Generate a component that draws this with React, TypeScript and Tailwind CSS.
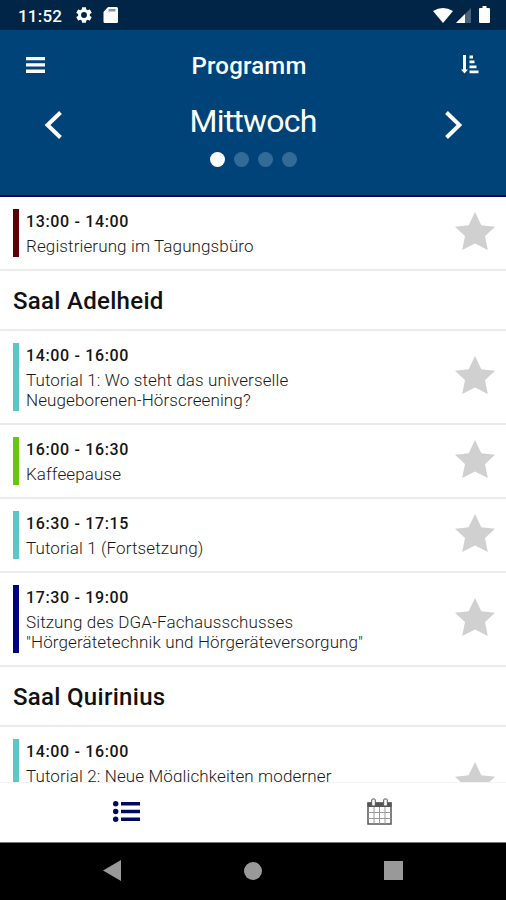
import { useState } from 'react'

type Session = { time: string; title: string[]; bar: string; tall?: boolean }
type Group = { room?: string; sessions: Session[] }

const groups: Group[] = [
  {
    sessions: [{ time: '13:00 - 14:00', title: ['Registrierung im Tagungsbüro'], bar: 'bg-[#5c0006]' }],
  },
  {
    room: 'Saal Adelheid',
    sessions: [
      {
        time: '14:00 - 16:00',
        title: ['Tutorial 1: Wo steht das universelle', 'Neugeborenen-Hörscreening?'],
        bar: 'bg-[#5bc8c8]',
      },
      { time: '16:00 - 16:30', title: ['Kaffeepause'], bar: 'bg-[#66c80a]' },
      { time: '16:30 - 17:15', title: ['Tutorial 1 (Fortsetzung)'], bar: 'bg-[#5bc8c8]' },
      {
        time: '17:30 - 19:00',
        title: ['Sitzung des DGA-Fachausschusses', '"Hörgerätetechnik und Hörgeräteversorgung"'],
        bar: 'bg-[#000080]',
      },
    ],
  },
  {
    room: 'Saal Quirinius',
    sessions: [
      {
        time: '14:00 - 16:00',
        title: ['Tutorial 2: Neue Möglichkeiten moderner'],
        bar: 'bg-[#5bc8c8]',
        tall: true,
      },
    ],
  },
]

const days = ['Mittwoch', 'Donnerstag', 'Freitag', 'Samstag']

function StatusBar() {
  return (
    <div className="flex h-[30px] shrink-0 items-center bg-[#002547] pr-[15px] pl-[18px] text-white">
      <span className="w-[57px] pt-0.5 text-[17px] leading-none font-medium tracking-[0.200px]">11:52</span>
      <svg className="size-[18px]" viewBox="1 1 22 22" fill="currentColor">
        <path d="M19.14 12.94c.04-.3.06-.61.06-.94 0-.32-.02-.64-.07-.94l2.03-1.58a.49.49 0 0 0 .12-.61l-1.92-3.32a.49.49 0 0 0-.59-.22l-2.39.96c-.5-.38-1.03-.7-1.62-.94l-.36-2.54a.48.48 0 0 0-.48-.41h-3.84c-.24 0-.43.17-.47.41l-.36 2.54c-.59.24-1.13.57-1.62.94l-2.39-.96a.48.48 0 0 0-.59.22L2.74 8.870c-.12.21-.08.47.12.61l2.03 1.58c-.05.3-.09.63-.09.94s.02.64.07.94l-2.03 1.58a.49.49 0 0 0-.12.61l1.920 3.320c.12.22.37.29.59.22l2.390-.96c.5.38 1.03.7 1.620.94l.36 2.540c.05.24.24.41.48.41h3.840c.24 0 .44-.17.47-.41l.36-2.540c.59-.24 1.130-.56 1.620-.94l2.390.96c.22.08.47 0 .59-.22l1.920-3.320a.49.49 0 0 0-.12-.61l-2.010-1.580zM12 15.600A3.600 3.600 0 1 1 12 8.400a3.600 3.600 0 0 1 0 7.200z" />
      </svg>
      <svg className="ml-2.5 h-4 w-[15px]" viewBox="0 0 15 16">
        <path d="M5 0h8.500Q15 0 15 1.500V14.500Q15 16 13.500 16H2Q.5 16 .5 14.500V5z" fill="#fff" />
        <path d="M5.500 2h7v2.500h-7z" fill="#8595a8" />
      </svg>
      <svg className="ml-auto h-[15px] w-5" viewBox="0 0 20 15" fill="currentColor">
        <path d="M0 3Q10-3 20 3L10 15z" />
      </svg>
      <svg className="ml-[3px] h-[15px] w-[15px]" viewBox="0 0 15 15">
        <path d="M15 0v15H0z" fill="#47627d" />
        <path d="M9 6v9H0z" fill="#fff" />
      </svg>
      <svg className="mr-px mb-px ml-2 h-[17px] w-[11px]" viewBox="0 0 11 17" fill="currentColor">
        <path d="M3.500 0h4v2H10q1 0 1 1v13q0 1-1 1H1q-1 0-1-1V3q0-1 1-1h2.500z" />
      </svg>
    </div>
  )
}

function Star() {
  return (
    <svg className="mb-1 h-[38px] w-10 shrink-0" viewBox="0 0 40 38" fill="#d0d0d0">
      <path d="M20 0l6.300 13.200L40 14.800 30 24l2.800 14L20 31.500 7.200 38 10 24 0 14.800l13.700-1.600z" />
    </svg>
  )
}

function SessionRow({ session }: { session: Session }) {
  return (
    <div className="flex shrink-0 items-center border-b-2 border-[#ebebeb] py-3 pr-[11px] pl-[13px]">
      <div className={`w-[5.500px] shrink-0 self-stretch ${session.bar}`} />
      <div className={`flex-1 pb-px pl-[7.500px] whitespace-nowrap ${session.tall ? 'h-[88px]' : ''}`}>
        <p className="h-[27px] text-[16px] leading-[25px] font-medium tracking-[0.650px] text-[#151515]">{session.time}</p>
        {session.title.map((line) => (
          <p key={line} className="h-5 text-[17px] leading-5 font-light tracking-[0.120px] text-[#1a1a1a]">
            {line}
          </p>
        ))}
      </div>
      <Star />
    </div>
  )
}

export default function App() {
  const [day, setDay] = useState(0)

  return (
    <div className="flex h-[900px] w-[506px] flex-col overflow-hidden bg-white font-['Roboto',sans-serif]">
      <StatusBar />

      <header className="flex h-[167px] shrink-0 flex-col border-b-2 border-[#00005f] bg-[#004379] text-white">
        <div className="flex h-[70px] items-center justify-between px-[26px]">
          <button aria-label="Menü">
            <svg className="h-4 w-[19px]" viewBox="0 0 19 16" fill="currentColor">
              <path d="M0 0h19v3.300H0zM0 6.300h19v3.300H0zM0 12.600h19v3.300H0z" />
            </svg>
          </button>
          <h1 className="pt-0.5 pr-2 text-[24px] leading-none font-medium tracking-[0.200px]">Programm</h1>
          <button aria-label="Sortieren" className="pb-0.5">
            <svg className="h-[19px] w-[19px]" viewBox="0 0 19 19" fill="currentColor">
              <path d="M2 0h3v14.500h2L3.500 18.500 0 14.500h2zM8.500.5H12v3H8.500zM8.500 5.500h5v2.700h-5zM8.500 10.500h7v2.700h-7zM8.500 15.500H17.500v2.700h-9z" />
            </svg>
          </button>
        </div>
        <div className="flex h-[49px] items-center justify-between px-11">
          <button aria-label="Vorheriger Tag" onClick={() => setDay(Math.max(0, day - 1))}>
            <svg className="h-7 w-[18px]" viewBox="0 0 18 28" fill="none" stroke="currentColor" strokeWidth="4">
              <path d="M16.500 1.500L3.500 14l13 12.500" />
            </svg>
          </button>
          <h2 className="pb-2 text-[32px] leading-none tracking-[-0.800px]">{days[day]}</h2>
          <button aria-label="Nächster Tag" onClick={() => setDay(Math.min(days.length - 1, day + 1))}>
            <svg className="h-7 w-[18px]" viewBox="0 0 18 28" fill="none" stroke="currentColor" strokeWidth="4">
              <path d="M2.500 1.500l13 12.500-13 12.500" />
            </svg>
          </button>
        </div>
        <div className="flex justify-center gap-[9px] pt-[3px]">
          {days.map((d, i) => (
            <span key={d} className={`size-[15px] rounded-full ${i === day ? 'bg-white' : 'bg-[#336b97]'}`} />
          ))}
        </div>
      </header>

      <main className="flex min-h-0 flex-1 flex-col overflow-hidden">
        {groups.map((group, i) => (
          <section key={i} className="shrink-0">
            {group.room && (
              <h3 className="flex h-[60px] items-center border-b-2 border-[#ebebeb] pt-0.5 pl-[13px] text-[24px] font-medium tracking-[0.300px] text-[#111]">
                {group.room}
              </h3>
            )}
            {group.sessions.map((s) => (
              <SessionRow key={s.time} session={s} />
            ))}
          </section>
        ))}
      </main>

      <nav className="grid h-[60px] shrink-0 grid-cols-2 place-items-center border-t border-[#f4f4f4] bg-white pb-0.5">
        <svg className="h-[21px] w-[27px]" viewBox="0 0 27 21" fill="#000a5c">
          <circle cx="2.700" cy="2.700" r="2.700" />
          <circle cx="2.700" cy="10.500" r="2.700" />
          <circle cx="2.700" cy="18.300" r="2.700" />
          <path d="M8 .9h19v3.600H8zM8 8.700h19v3.600H8zM8 16.500h19v3.600H8z" />
        </svg>
        <svg className="h-[27px] w-[25px]" viewBox="0 0 25 27">
          <path d="M.5 4.500h24V9H.5z" fill="#555" />
          <path d="M1 5v21h23V5z" fill="none" stroke="#555" strokeWidth="1.500" />
          <path d="M7 9v17M12.500 9v17M18 9v17M1 14.500h23M1 20.500h23" stroke="#999" strokeWidth="1" />
          <rect x="4.700" y="1" width="3.600" height="7" rx="1" fill="#fff" stroke="#555" />
          <rect x="16.700" y="1" width="3.600" height="7" rx="1" fill="#fff" stroke="#555" />
        </svg>
      </nav>

      <footer className="flex h-[58px] shrink-0 items-center justify-between border-t border-[#777] bg-black px-[103px] pb-0.5">
        <svg className="h-[21px] w-[18px]" viewBox="0 0 18 21" fill="#999">
          <path d="M18 0v21L0 10.500z" />
        </svg>
        <span className="size-[18px] rounded-full bg-[#999]" />
        <span className="size-[19px] bg-[#999]" />
      </footer>
    </div>
  )
}
